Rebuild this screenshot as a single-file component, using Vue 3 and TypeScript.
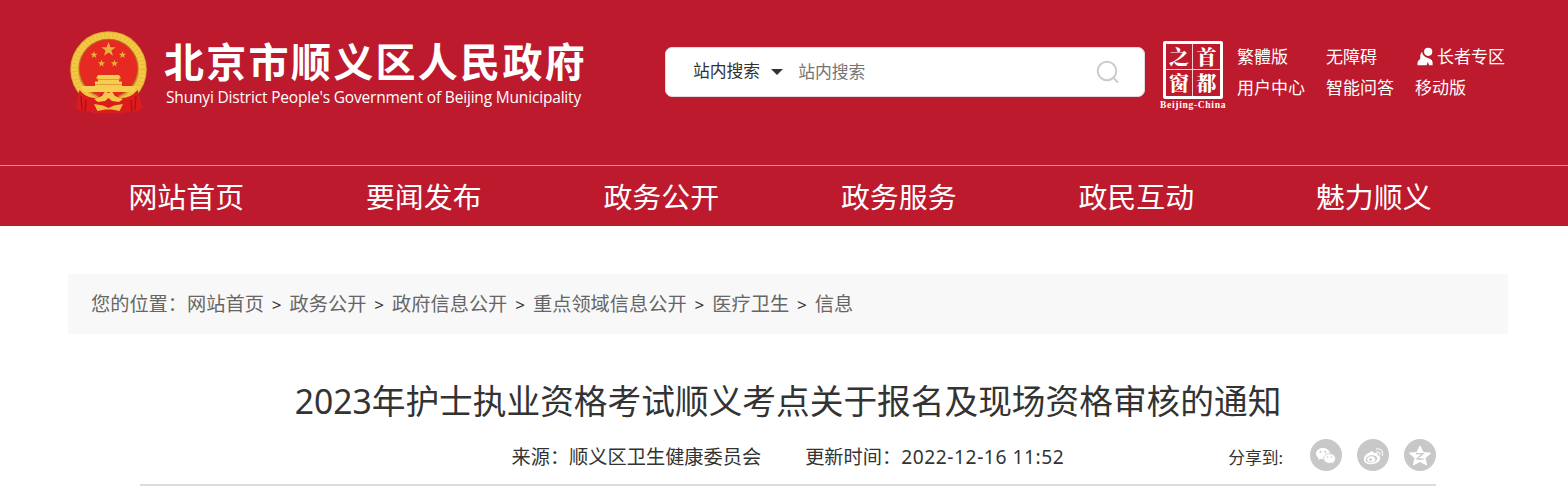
<script setup lang="ts">
interface QuickLink {
  text: string
  elder?: boolean
}

const quickLinks: QuickLink[] = [
  { text: '繁體版' },
  { text: '无障碍' },
  { text: '长者专区', elder: true },
  { text: '用户中心' },
  { text: '智能问答' },
  { text: '移动版' },
]

const navs: string[] = ['网站首页', '要闻发布', '政务公开', '政务服务', '政民互动', '魅力顺义']

const crumbs: string[] = ['网站首页', '政务公开', '政府信息公开', '重点领域信息公开', '医疗卫生', '信息']

const star = '0,-10 2.4,-3.1 9.5,-3.1 3.8,1.2 5.9,8.1 0,4 -5.9,8.1 -3.8,1.2 -9.5,-3.1 -2.4,-3.1'
const fatStar = '0,-10 2.9,-3.8 9.8,-3.1 4.7,1.6 6.1,8.3 0,5 -6.1,8.3 -4.7,1.6 -9.8,-3.1 -2.9,-3.8'
</script>

<template>
  <div class="page">
    <header class="header">
      <div class="top">
        <div class="logo">
          <svg class="emblem" viewBox="0 0 80 84">
            <circle cx="39.500" cy="39.500" r="38.300" fill="#dfa52f" />
            <circle cx="39.500" cy="39.500" r="34" fill="none" stroke="#f3c944" stroke-width="6.500" />
            <circle cx="39.500" cy="39.500" r="34" fill="none" stroke="#e8b63a" stroke-width="5" stroke-dasharray="1 3" />
            <circle cx="39.500" cy="38.500" r="29.800" fill="#b96b22" />
            <circle cx="39.500" cy="38.500" r="28.800" fill="#e62a22" />
            <g fill="#e7b33a">
              <polygon :points="star" transform="translate(39.500 19.500) scale(.76)" />
              <polygon :points="star" transform="translate(25 25) scale(.38)" />
              <polygon :points="star" transform="translate(53.500 25) scale(.38)" />
              <polygon :points="star" transform="translate(32.500 33.500) scale(.38)" />
              <polygon :points="star" transform="translate(45.500 33.500) scale(.38)" />
            </g>
            <path d="M29 45h21l2 3.500h-2v3h3v4.500h14l-2 6H14l-2-6h14v-4.500h3v-3h-2z" fill="#f6cd50" />
            <path d="M28 49.500h23M26 54.500h27" stroke="#e08e2c" stroke-width=".8" />
            <path d="M10.500 60Q18 69 28 68l4-4 7.500-2 7.500 2 4 4q10 1 17.500-8l5 17q-4 6-11 4l-9 2H25l-8-2q-7 1-10-4z" fill="#dc1b1f" />
            <path d="M12 66l1 14M17 70l-1 11M67 66l-1 14M62 70l1 11" stroke="#a41219" stroke-width="1.300" />
            <path d="M25 69l8-3 3-4.500 3.500 1.500 3.500-1.500 3 4.500 8 3-4 3-7-1-3.500-3-3.500 3-7 1z" fill="#f5c84a" />
            <path d="M25 74l9 1.500 5.500 2.500 5.500-2.500 9-1.500-3.500 7-7.500-1.500h-7L28.500 81z" fill="#f1bf40" />
          </svg>
          <div class="logo-text">
            <div class="logo-cn">北京市顺义区人民政府</div>
            <div class="logo-en">Shunyi District People's Government of Beijing Municipality</div>
          </div>
        </div>

        <div class="search">
          <span class="search-type">站内搜索</span>
          <i class="caret"></i>
          <span class="search-input">站内搜索</span>
          <svg class="search-icon" viewBox="0 0 24 24">
            <circle cx="11" cy="11" r="9.300" />
            <path d="M17.500 18L22 22.500" />
          </svg>
        </div>

        <div class="capital">
          <div class="seal">
            <span>之</span><span>首</span><span>窗</span><span>都</span>
          </div>
          <div class="seal-en">Beijing-China</div>
        </div>

        <div class="quick">
          <a v-for="item in quickLinks" :key="item.text">
            <svg v-if="item.elder" class="elder" viewBox="0 0 18 20">
              <circle cx="12.200" cy="4.800" r="4.100" />
              <path d="M6 4.500Q6.500 9 11 10.800l2.800 1q2.800 1 2.800 3.500v3H13.200l-1.400-3.300-1.200 3.300H1.600q-.8-4.300 2.600-6.300Q3.400 8 6 4.500z" />
            </svg>{{ item.text }}
          </a>
        </div>
      </div>

      <nav class="nav">
        <a v-for="n in navs" :key="n">{{ n }}</a>
      </nav>
    </header>

    <div class="crumbs">
      <span>您的位置：</span>
      <template v-for="(c, i) in crumbs" :key="c">
        <span v-if="i > 0" class="sep">&gt;</span>
        <a>{{ c }}</a>
      </template>
    </div>

    <main class="article">
      <h1>2023年护士执业资格考试顺义考点关于报名及现场资格审核的通知</h1>
      <div class="meta">
        <span class="source">来源：顺义区卫生健康委员会</span>
        <span>更新时间：<span class="time">2022-12-16 11:52</span></span>
        <div class="share">
          <span class="share-label">分享到:</span>
          <svg viewBox="0 0 32 32">
            <circle cx="16" cy="16" r="16" fill="#c8c8c8" />
            <path d="M13 9c-4 0-7 2.500-7 5.600 0 1.800 1 3.300 2.600 4.300l-.7 2.200 2.600-1.300c.8.300 1.600.4 2.500.4 4 0 7-2.500 7-5.600S17 9 13 9z" fill="#fff" />
            <path d="M19.600 14.600c-3.300 0-6 2.100-6 4.900s2.700 4.800 6 4.800c.7 0 1.400-.1 2-.3l2.300 1.200-.6-2c1.400-.9 2.200-2.200 2.200-3.700 0-2.800-2.600-4.900-5.900-4.900z" fill="#fff" stroke="#c8c8c8" stroke-width=".8" />
            <g fill="#c8c8c8">
              <circle cx="10.500" cy="12.800" r="1" /><circle cx="15.300" cy="12.800" r="1" />
              <circle cx="17.500" cy="18" r=".8" /><circle cx="21.500" cy="18" r=".8" />
            </g>
          </svg>
          <svg viewBox="0 0 32 32">
            <circle cx="16" cy="16" r="16" fill="#c8c8c8" />
            <path d="M13.500 12.700c2-1 3.500-.6 3.200 1.600 2.500-1 4.700-.6 3.900 1.900 2 .6 3 1.700 2.600 3.400-.5 3.200-4.500 5.600-9 5.600-4.200 0-7.400-2-7.400-5 0-2.700 3.200-5.900 6.700-7.500z" fill="#fff" />
            <ellipse cx="14.500" cy="20" rx="5.800" ry="3.800" fill="#c8c8c8" transform="rotate(-8 14.500 20)" />
            <ellipse cx="14.200" cy="20.200" rx="4" ry="3" fill="#fff" />
            <circle cx="13.500" cy="20.600" r="1.300" fill="#c8c8c8" />
            <path d="M19.500 10c4-.8 7 2.200 6 6.200M19.800 12.900c2-.3 3.400 1 3 2.900" fill="none" stroke="#fff" stroke-opacity=".8" stroke-width="1.400" stroke-linecap="round" />
          </svg>
          <svg viewBox="0 0 32 32">
            <circle cx="16" cy="16" r="16" fill="#c8c8c8" />
            <polygon :points="fatStar" transform="translate(16 17.300) scale(1.040 1)" fill="#fff" stroke="#fff" stroke-width="1.200" stroke-linejoin="round" />
            <path d="M12 14.600h7l-6 5.200q3.500.8 6.500.1" fill="none" stroke="#c8c8c8" stroke-width="1.300" />
          </svg>
        </div>
      </div>
    </main>
  </div>
</template>

<style>
body {
  margin: 0;
  background: #fff;
}
</style>

<style scoped>
.page {
  height: 491px;
  overflow: hidden;
  font-family: "Noto Sans", "Noto Sans CJK SC", sans-serif;
  color: #333;
}

.header {
  height: 226px;
  background: #bd1a2d;
  color: #fff;
}

.top {
  display: flex;
  align-items: flex-start;
  height: 165px;
  padding-left: 69px;
}

.logo {
  display: flex;
  width: 596px;
  padding-top: 30px;
}

.emblem {
  width: 80px;
  height: 84px;
}

.logo-text {
  padding: 5px 0 0 15px;
  white-space: nowrap;
}

.logo-cn {
  font: bold 40px/50px "Noto Sans CJK SC", sans-serif;
  letter-spacing: 2.300px;
}

.logo-en {
  padding: 1px 0 0 2px;
  font: 15.500px/22px "Open Sans", sans-serif;
  letter-spacing: -.18px;
}

.search {
  display: flex;
  align-items: center;
  box-sizing: border-box;
  width: 480px;
  height: 50px;
  margin-top: 47px;
  padding: 0 24px 0 27px;
  border: 1px solid #ddd;
  border-radius: 7px;
  background: #fff;
  font-size: 16.800px;
  line-height: 48px;
  color: #333;
}

.search-type {
  padding-bottom: 2px;
}

.caret {
  margin: 0 15px 0 11px;
  border: 6px solid transparent;
  border-top-color: #333;
  border-bottom: 0;
}

.search-input {
  flex: 1;
  color: #757575;
}

.search-icon {
  width: 24px;
  height: 24px;
  fill: none;
  stroke: #ccc;
  stroke-width: 2;
}

.capital {
  width: 66px;
  margin: 41px 0 0 15px;
}

.seal {
  display: grid;
  grid-template-columns: 1fr 1fr;
  grid-template-rows: 1fr 1fr;
  box-sizing: border-box;
  width: 60px;
  height: 58px;
  margin-left: 3px;
  border: 3px solid #fff;
  border-radius: 2px;
  font: 900 20px/25px "Noto Serif CJK SC", "Noto Sans CJK SC", serif;
  text-align: center;
}

.seal span:nth-child(odd) {
  border-right: 1px solid #f3cfd3;
}

.seal span:nth-child(-n + 2) {
  border-bottom: 1px solid #f3cfd3;
}

.seal-en {
  font: bold 9.500px/12px "Liberation Serif", serif;
  letter-spacing: .7px;
  white-space: nowrap;
}

.quick {
  display: grid;
  grid-template-columns: 89px 89px 100px;
  grid-auto-rows: 31px;
  margin: 41px 0 0 11px;
  font-size: 17px;
  line-height: 31px;
  white-space: nowrap;
}

.quick a {
  display: flex;
  align-items: center;
}

.elder {
  width: 18px;
  height: 20px;
  margin: 0 3px 0 1px;
  fill: #fff;
}

.nav {
  display: flex;
  box-sizing: border-box;
  height: 61px;
  padding-left: 67.500px;
  border-top: 1px solid #de8d96;
}

.nav a {
  width: 237.500px;
  font-size: 28.900px;
  line-height: 62px;
  text-align: center;
}

.crumbs {
  display: flex;
  box-sizing: border-box;
  width: 1440px;
  height: 60px;
  margin: 48px 0 0 68px;
  padding-left: 23px;
  background: #f8f8f8;
  font-size: 19.220px;
  line-height: 60px;
  color: #666;
}

.sep {
  width: 25.700px;
  text-align: center;
  font-size: 17px;
  line-height: 61px;
  color: #333;
}

.article {
  width: 1296px;
  margin: 0 0 0 140px;
}

h1 {
  margin: 0;
  padding-top: 40px;
  font-size: 33.700px;
  font-weight: 400;
  line-height: 55px;
  text-align: center;
  white-space: nowrap;
}

.meta {
  display: flex;
  height: 55px;
  padding-left: 371.500px;
  border-bottom: 2px solid #ddd;
  font-size: 19.200px;
  line-height: 56px;
}

.source {
  margin-right: 44px;
}

.time {
  letter-spacing: .55px;
}

.share {
  display: flex;
  align-items: center;
  gap: 15px;
  height: 52px;
  margin-left: auto;
  font-size: 16.800px;
}

.share svg {
  width: 32px;
  height: 32px;
}

.share-label {
  padding: 6px 12px 0 0;
}
</style>
